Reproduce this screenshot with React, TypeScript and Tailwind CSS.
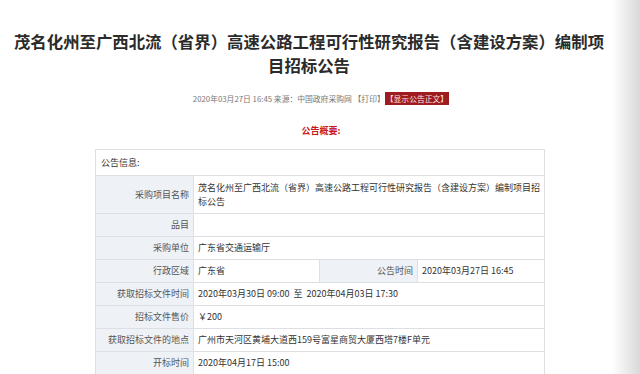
const FONT = { fontFamily: '"Noto Sans CJK SC", "Noto Sans", sans-serif' };

function LabelCell({ children }: { children: React.ReactNode }) {
  return (
    <td className="bg-[#eef1f6] border border-[#dcdfe4] text-right pr-[4px] text-[#555] align-middle whitespace-nowrap">
      {children}
    </td>
  );
}

function ValueCell({ children, span = 1 }: { children?: React.ReactNode; span?: number }) {
  return (
    <td colSpan={span} className="bg-white border border-[#dcdfe4] pl-[4px] pr-[4px] text-[#333] align-middle">
      {children}
    </td>
  );
}

const rows: [string, string][] = [
  ['品目', ''],
  ['采购单位', '广东省交通运输厅'],
];

const rowsAfter: [string, string][] = [
  ['获取招标文件时间', '2020年03月30日 09:00  至  2020年04月03日 17:30'],
  ['招标文件售价', '￥200'],
  ['获取招标文件的地点', '广州市天河区黄埔大道西159号富星商贸大厦西塔7楼F单元'],
  ['开标时间', '2020年04月17日 15:00'],
  ['', ''],
];

export default function App() {
  return (
    <div className="relative w-[640px] h-[374px] overflow-hidden bg-white" style={FONT}>
      <h1 className="pt-[29px] pl-[8px] pr-[30px] text-center text-[16.4px] leading-[24px] font-bold text-[#2b2b2b]">
        茂名化州至广西北流（省界）高速公路工程可行性研究报告（含建设方案）编制项目招标公告
      </h1>

      <div className="mt-[15px] flex items-center justify-center pl-[2px] text-[7.8px] leading-[13px] text-[#777]">
        <span className="whitespace-pre">2020年03月27日 16:45 来源：中国政府采购网 【打印】</span>
        <span className="bg-[#9e1b1e] text-[#ffe3e3] px-[1px] h-[13px] leading-[13px]">【显示公告正文】</span>
      </div>

      <div className="mt-[20px] text-center pl-[2px] text-[9px] leading-[12px] font-bold text-[#c8161d]">
        公告概要:
      </div>

      <table className="mt-[12px] ml-[95px] w-[449px] table-fixed border-collapse text-[9px] leading-[14px]">
        <colgroup>
          <col className="w-[98px]" />
          <col className="w-[126px]" />
          <col className="w-[98px]" />
          <col className="w-[127px]" />
        </colgroup>
        <tbody>
          <tr className="h-[26px]">
            <td colSpan={4} className="border border-[#dcdfe4] pl-[5px] text-[#333] bg-white">公告信息:</td>
          </tr>
          <tr className="h-[38px]">
            <LabelCell>采购项目名称</LabelCell>
            <ValueCell span={3}>茂名化州至广西北流（省界）高速公路工程可行性研究报告（含建设方案）编制项目招标公告</ValueCell>
          </tr>
          {rows.map(([k, v]) => (
            <tr key={k} className="h-[23px]">
              <LabelCell>{k}</LabelCell>
              <ValueCell span={3}>{v}</ValueCell>
            </tr>
          ))}
          <tr className="h-[23px]">
            <LabelCell>行政区域</LabelCell>
            <ValueCell>广东省</ValueCell>
            <LabelCell>公告时间</LabelCell>
            <ValueCell>2020年03月27日 16:45</ValueCell>
          </tr>
          {rowsAfter.map(([k, v], i) => (
            <tr key={i} className="h-[23px]">
              <LabelCell>{k}</LabelCell>
              <ValueCell span={3}>
                <span className="whitespace-pre">{v}</span>
              </ValueCell>
            </tr>
          ))}
        </tbody>
      </table>

      {/* page curl shading on the right edge */}
      <div className="pointer-events-none absolute right-0 top-0 h-full w-[28px] bg-linear-to-r from-white/0 to-[#d9d9d9]" />
    </div>
  );
}
